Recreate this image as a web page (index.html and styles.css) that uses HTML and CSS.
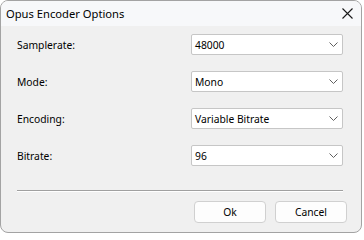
FILE: index.html
```html
<!DOCTYPE html>
<html>
<head>
<meta charset="utf-8">
<link rel="stylesheet" href="styles.css">
</head>
<body>
<div class="window">
  <div class="titlebar">
    <span class="title">Opus Encoder Options</span>
    <svg class="close" width="11" height="11" viewBox="0 0 11 11"><path d="M0.5 0.5 L10.5 10.5 M10.5 0.5 L0.5 10.5" stroke="#1a1a1a" stroke-width="1.1" fill="none"/></svg>
  </div>
  <div class="content">
    <div class="form">
      <label class="label">Samplerate:</label>
      <div class="combo"><span>48000</span><svg class="chev" width="9" height="5" viewBox="0 0 9 5"><path d="M0.5 0.5 L4.5 4.5 L8.5 0.5" stroke="#606060" stroke-width="1" fill="none"/></svg></div>
      <label class="label">Mode:</label>
      <div class="combo"><span>Mono</span><svg class="chev" width="9" height="5" viewBox="0 0 9 5"><path d="M0.5 0.5 L4.5 4.5 L8.5 0.5" stroke="#606060" stroke-width="1" fill="none"/></svg></div>
      <label class="label">Encoding:</label>
      <div class="combo"><span>Variable Bitrate</span><svg class="chev" width="9" height="5" viewBox="0 0 9 5"><path d="M0.5 0.5 L4.5 4.5 L8.5 0.5" stroke="#606060" stroke-width="1" fill="none"/></svg></div>
      <label class="label">Bitrate:</label>
      <div class="combo"><span>96</span><svg class="chev" width="9" height="5" viewBox="0 0 9 5"><path d="M0.5 0.5 L4.5 4.5 L8.5 0.5" stroke="#606060" stroke-width="1" fill="none"/></svg></div>
    </div>
    <div class="sep"></div>
    <div class="buttons">
      <button class="btn">Ok</button>
      <button class="btn">Cancel</button>
    </div>
  </div>
</div>
</body>
</html>
```
FILE: styles.css
```css
html, body {
  margin: 0;
  padding: 0;
  background: #ffffff;
}
body {
  font-family: "Noto Sans", "Open Sans", sans-serif;
  font-size: 10.3px;
  color: #000;
}
.window {
  width: 362px;
  height: 233px;
  box-sizing: border-box;
  border: 1px solid #a3a3a3;
  border-radius: 8px;
  background: #f0f0f0;
  overflow: hidden;
  display: flex;
  flex-direction: column;
}
.titlebar {
  height: 25px;
  background: #f7f8fa;
  display: flex;
  align-items: center;
  justify-content: space-between;
  padding: 0 8px 0 5px;
}
.title {
  font-size: 11.2px;
  color: #000;
  line-height: 16px;
}
.close {
  display: block;
  margin-bottom: 1px;
}
.content {
  padding: 8px 16px 0 16px;
  display: flex;
  flex-direction: column;
}
.form {
  display: grid;
  grid-template-columns: 174px 152px;
  grid-auto-rows: 21px;
  row-gap: 16px;
  align-items: center;
}
.label {
  line-height: 16px;
}
.combo {
  height: 21px;
  box-sizing: border-box;
  border: 1px solid #c6c6c6;
  border-radius: 2px;
  background: #fff;
  display: flex;
  align-items: center;
  justify-content: space-between;
  padding: 0 4px 0 3px;
}
.combo span {
  line-height: 16px;
}
.chev {
  display: block;
}
.sep {
  margin-top: 24px;
  width: 326px;
  height: 1px;
  background: #a0a0a0;
  border-bottom: 1px solid #ffffff;
}
.buttons {
  margin-top: 9px;
  margin-right: -2px;
  display: flex;
  justify-content: flex-end;
  gap: 9px;
}
.btn {
  width: 72px;
  height: 22px;
  box-sizing: border-box;
  border: 1px solid #d0d0d0;
  border-radius: 4px;
  background: #fdfdfd;
  font-family: inherit;
  font-size: 10.3px;
  color: #000;
  padding: 0;
}
```
